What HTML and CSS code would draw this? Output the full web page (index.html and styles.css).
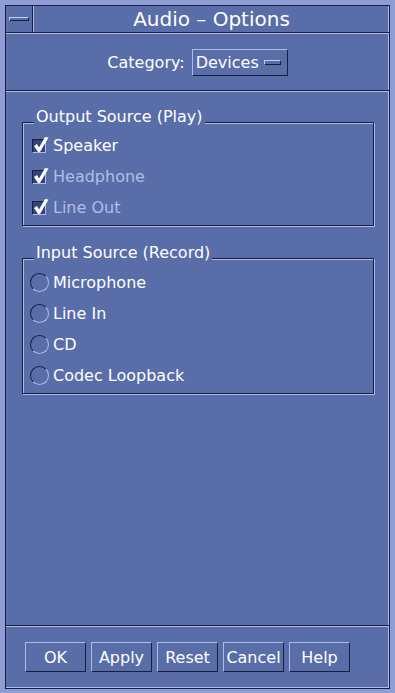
FILE: index.html
```html
<!DOCTYPE html>
<html lang="en">
<head>
  <meta charset="UTF-8" />
  <title>Audio - Options</title>
  <link rel="stylesheet" href="styles.css">
</head>
<body>
  <div class="window">

    <!-- TITLE BAR -->
    <div class="titlebar">
      <div class="menu-btn"><span class="menu-bar"></span></div>
      <div class="title">Audio – Options</div>
    </div>

    <!-- CATEGORY -->
    <div class="category">
      <span>Category:</span>
      <div class="dropdown">Devices <span class="menu-bar small"></span></div>
    </div>

    <!-- GROUPS -->
    <div class="groups">
      <div class="group">
        <div class="group-title">Output Source (Play)</div>
        <div class="row">
          <span class="widget"><span class="checkbox"><svg viewBox="0 0 14 14" width="14" height="14"><path d="M1 7 L4 5 L6 8.5 L12 -2 L15.5 -1.5 L7 13 L5 13 Z" fill="#fff"/></svg></span></span>
          <span>Speaker</span>
        </div>
        <div class="row disabled">
          <span class="widget"><span class="checkbox"><svg viewBox="0 0 14 14" width="14" height="14"><path d="M1 7 L4 5 L6 8.5 L12 -2 L15.5 -1.5 L7 13 L5 13 Z" fill="#fff"/></svg></span></span>
          <span>Headphone</span>
        </div>
        <div class="row disabled">
          <span class="widget"><span class="checkbox"><svg viewBox="0 0 14 14" width="14" height="14"><path d="M1 7 L4 5 L6 8.5 L12 -2 L15.5 -1.5 L7 13 L5 13 Z" fill="#fff"/></svg></span></span>
          <span>Line Out</span>
        </div>
      </div>

      <div class="group second">
        <div class="group-title">Input Source (Record)</div>
        <div class="row"><span class="widget"><span class="radio"></span></span><span>Microphone</span></div>
        <div class="row"><span class="widget"><span class="radio"></span></span><span>Line In</span></div>
        <div class="row"><span class="widget"><span class="radio"></span></span><span>CD</span></div>
        <div class="row"><span class="widget"><span class="radio"></span></span><span>Codec Loopback</span></div>
      </div>
    </div>

    <!-- BUTTONS -->
    <div class="buttons">
      <button>OK</button>
      <button>Apply</button>
      <button>Reset</button>
      <button>Cancel</button>
      <button>Help</button>
    </div>

  </div>
</body>
</html>
```

FILE: styles.css
```css
/* BASIC RESET */
* {
  margin: 0;
  padding: 0;
  box-sizing: border-box;
}
html, body {
  height: 693px;
}
body {
  background-color: #8f9dd6;
  padding: 5px 5px 4px 5px;
  font-family: "DejaVu Sans", Arial, sans-serif;
  font-size: 16px;
  color: #fff;
}

/* WINDOW FRAME */
.window {
  height: 100%;
  display: flex;
  flex-direction: column;
  background-color: #596da9;
  border: 1px solid #1a1f3d;
  box-shadow: inset -1px -1px 0 #aebbe8;
}

/* TITLE BAR */
.titlebar {
  display: flex;
  height: 27px;
  border-bottom: 1px solid #1a1f3d;
}
.menu-btn {
  width: 27px;
  border-right: 1px solid #1a1f3d;
  display: flex;
  align-items: center;
  justify-content: center;
}
.menu-bar {
  display: inline-block;
  width: 20px;
  height: 4px;
  border-top: 1px solid #c4cef2;
  border-left: 1px solid #c4cef2;
  border-bottom: 1px solid #1a1f3d;
  border-right: 1px solid #1a1f3d;
}
.menu-bar.small {
  width: 17px;
  height: 5px;
  margin-left: 5px;
}
.title {
  flex: 1;
  border-left: 1px solid #aebbe8;
  text-align: center;
  font-size: 20px;
  line-height: 26px;
}

/* CATEGORY */
.category {
  height: 58px;
  border-top: 1px solid #aebbe8;
  border-bottom: 1px solid #1a1f3d;
  display: flex;
  align-items: center;
  justify-content: center;
  gap: 7px;
}
.dropdown {
  width: 96px;
  height: 27px;
  padding-left: 3px;
  display: flex;
  align-items: center;
  border-top: 1px solid #aebbe8;
  border-left: 1px solid #aebbe8;
  border-right: 1px solid #1a1f3d;
  border-bottom: 1px solid #1a1f3d;
}

/* GROUPS */
.groups {
  flex: 1;
  border-top: 1px solid #aebbe8;
  border-bottom: 1px solid #1a1f3d;
  padding: 30px 15px 0 16px;
}
.group {
  border: 1px solid #1a1f3d;
  box-shadow: 1px 1px 0 #aebbe8, inset 1px 1px 0 #aebbe8;
  padding: 0 0 2px 6px;
}
.group.second {
  margin-top: 32px;
  padding-bottom: 2px;
}
.group-title {
  width: max-content;
  margin: -14px 0 5px 5px;
  padding: 0 2px;
  line-height: 16px;
  background-color: #596da9;
}
.group.second .group-title {
  margin-bottom: 6px;
}
.row {
  display: flex;
  align-items: center;
  height: 31px;
}
.row.disabled {
  color: #b2bde8;
}
.widget {
  width: 20px;
  margin-right: 4px;
  display: flex;
  justify-content: center;
}
.checkbox {
  width: 14px;
  height: 14px;
  background-color: #34437b;
  border-top: 1px solid #1a1f3d;
  border-left: 1px solid #1a1f3d;
  border-right: 1px solid #aebbe8;
  border-bottom: 1px solid #aebbe8;
  display: flex;
}
.checkbox svg {
  overflow: visible;
  margin: -1px 0 0 0;
}
.radio {
  width: 19px;
  height: 19px;
  border-radius: 50%;
  border: 1px solid;
  border-color: #1a1f3d #aebbe8 #aebbe8 #1a1f3d;
}

/* BUTTONS */
.buttons {
  border-top: 1px solid #aebbe8;
  padding: 15px 0 0 19px;
  height: 62px;
  display: flex;
  gap: 5px;
}
.buttons button {
  width: 61px;
  height: 30px;
  background: #596da9;
  color: #fff;
  font-family: "DejaVu Sans", Arial, sans-serif;
  font-size: 16px;
  border-top: 1px solid #aebbe8;
  border-left: 1px solid #aebbe8;
  border-right: 1px solid #1a1f3d;
  border-bottom: 1px solid #1a1f3d;
}
```
